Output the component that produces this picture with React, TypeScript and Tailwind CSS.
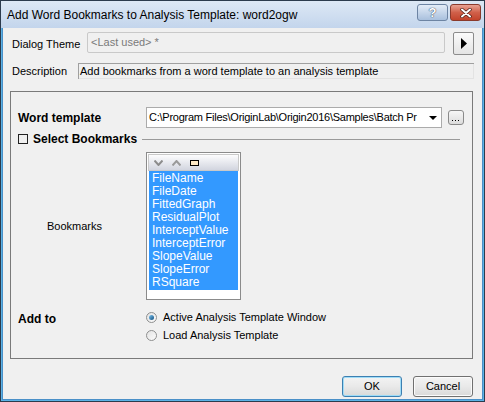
import React from "react";

const bookmarks = [
  "FileName",
  "FileDate",
  "FittedGraph",
  "ResidualPlot",
  "InterceptValue",
  "InterceptError",
  "SlopeValue",
  "SlopeError",
  "RSquare",
];

function Button({ label, primary }: { label: string; primary?: boolean }) {
  return (
    <div
      className={
        "flex h-[21px] w-[60px] items-center justify-center rounded-[3px] border bg-gradient-to-b from-[#f3f3f3] via-[#e9e9e9] to-[#d9d9d9] text-[11px] text-black " +
        (primary
          ? "border-[#3c7fb1] shadow-[inset_0_0_0_1px_#9fdcf7]"
          : "border-[#707070] shadow-[inset_0_0_0_1px_#fbfbfb]")
      }
    >
      {label}
    </div>
  );
}

function Radio({ checked, label }: { checked?: boolean; label: string }) {
  return (
    <div className="flex h-[18px] items-center gap-[6px]">
      <div className="flex h-[11px] w-[11px] items-center justify-center rounded-full border border-[#8e8f8f] bg-gradient-to-br from-[#e2e2e2] to-[#fcfcfc]">
        {checked && (
          <div className="h-[5px] w-[5px] rounded-full bg-gradient-to-br from-[#7bc4f0] to-[#0c4f7f]" />
        )}
      </div>
      <span>{label}</span>
    </div>
  );
}

export default function App() {
  return (
    <div
      className="flex h-[402px] w-[485px] flex-col border border-[#2c3b4d] bg-[#5bb2e6] text-[11px] text-black"
      style={{ fontFamily: '"Liberation Sans", Arial, sans-serif' }}
    >
      {/* title bar */}
      <div className="flex h-[27px] items-center justify-between bg-gradient-to-b from-[#dde8f5] to-[#c3d5ec] pl-[6px] pr-[3px]">
        <span className="text-[12px] text-black">
          Add Word Bookmarks to Analysis Template: word2ogw
        </span>
        <div className="flex gap-[2px] self-start pt-[3px]">
          <div className="flex h-[17px] w-[31px] items-center justify-center rounded-[3px] border border-[#6d84a3] bg-gradient-to-b from-[#e3ecf7] to-[#a9c0dd] text-[13px] font-bold text-white [text-shadow:0_0_1px_#2d3e55,0_0_1px_#2d3e55]">
            ?
          </div>
          <div className="flex h-[17px] w-[31px] items-center justify-center rounded-[3px] border border-[#8a3a2c] bg-gradient-to-b from-[#e8a293] via-[#d0604a] to-[#c2432b]">
            <svg width="12" height="10" viewBox="0 0 12 10">
              <path d="M2 1.5 L10 8.5 M10 1.5 L2 8.5" stroke="#4a1c14" strokeWidth="3.4" strokeLinecap="round" />
              <path d="M2 1.5 L10 8.5 M10 1.5 L2 8.5" stroke="#ffffff" strokeWidth="2" strokeLinecap="round" />
            </svg>
          </div>
        </div>
      </div>

      {/* body */}
      <div className="mx-[1px] mb-[1px] flex flex-1 flex-col border-x-[1px] border-b-[1px] border-[#4a90c8] bg-[#f0f0f0] pt-[4px]">
        <div className="flex h-[23px] pl-[9px]">
          <div className="w-[75px] pt-[4px]">Dialog Theme</div>
          <div className="flex h-[21px] w-[358px] items-center rounded-[2px] border border-[#c9c9c9] bg-[#f0f0f0] pl-[3px] text-[#7a7a7a]">
            &lt;Last used&gt; *
          </div>
          <div className="ml-[8px] flex h-[23px] w-[21px] items-center justify-center rounded-[2px] border border-[#8c8c8c] bg-gradient-to-b from-[#fbfbfb] to-[#e4e4e4]">
            <svg width="6" height="11" viewBox="0 0 6 11">
              <path d="M0 0 L6 5.5 L0 11 Z" fill="#000" />
            </svg>
          </div>
        </div>

        <div className="mt-[8px] flex h-[16px] items-center pl-[9px]">
          <div className="w-[66px]">Description</div>
          <div className="flex h-[16px] w-[396px] items-center border-l border-t border-[#a0a0a0] bg-[#f0f0f0] pl-[1px] shadow-[inset_-1px_-1px_0_#e3e3e3]">
            Add bookmarks from a word template to an analysis template
          </div>
        </div>

        {/* group box */}
        <div className="ml-[7px] mt-[12px] flex h-[268px] w-[463px] flex-col border border-[#7a7a7a] pl-[7px] pt-[15px]">
          <div className="flex h-[21px] items-center">
            <div className="w-[128px] text-[12px] font-bold">Word template</div>
            <div className="flex h-[21px] w-[296px] items-center border border-[#ababab] bg-white pl-[2px]">
              <span className="w-[276px] whitespace-nowrap tracking-[-0.25px]">
                C:\Program Files\OriginLab\Origin2016\Samples\Batch Pr
              </span>
              <svg width="8" height="4" viewBox="0 0 8 4" className="ml-[4px]">
                <path d="M0 0 L8 0 L4 4 Z" fill="#000" />
              </svg>
            </div>
            <div className="ml-[6px] flex h-[15px] w-[16px] items-end justify-center rounded-[3px] border border-[#8a8a8a] bg-gradient-to-b from-[#f7f7f7] to-[#dcdcdc] pb-[2px]">
              <svg width="8" height="2" viewBox="0 0 8 2">
                <rect x="0" y="0" width="1" height="1" fill="#000" />
                <rect x="3" y="0" width="1" height="1" fill="#000" />
                <rect x="6" y="0" width="1" height="1" fill="#000" />
              </svg>
            </div>
          </div>

          <div className="mt-[5px] flex h-[12px] items-center">
            <div className="h-[10px] w-[10px] border border-[#222]" />
            <span className="ml-[5px] text-[12px] font-bold">Select Bookmarks</span>
            <div className="ml-[5px] mr-[12px] h-[1px] flex-1 bg-[#9a9a9a]" />
          </div>

          <div className="mt-[7px] flex">
            <div className="flex w-[128px] items-center pl-[29px]">Bookmarks</div>
            <div className="flex h-[148px] w-[95px] flex-col border border-[#8b8b8b] bg-white p-[1px]">
              <div className="flex h-[17px] items-center gap-[9px] border border-[#c9c9c9] bg-gradient-to-b from-[#fdfdfe] to-[#d2d5df] pl-[5px]">
                <svg width="9" height="6" viewBox="0 0 9 6">
                  <path d="M0.5 0.5 L4.5 5 L8.5 0.5" stroke="#8c8c8c" strokeWidth="2" fill="none" />
                </svg>
                <svg width="9" height="6" viewBox="0 0 9 6">
                  <path d="M0.5 5.5 L4.5 1 L8.5 5.5" stroke="#9a9a9a" strokeWidth="2" fill="none" />
                </svg>
                <div className="h-[6px] w-[9px] border border-black bg-[#fde9c6]" />
              </div>
              <div className="mx-[1px] flex flex-col bg-[#3399ff] py-[1px] pl-[3px] text-white">
                {bookmarks.map((b) => (
                  <div key={b} className="h-[13px] leading-[13px] text-[12px]">
                    {b}
                  </div>
                ))}
              </div>
            </div>
          </div>

          <div className="mt-[8px] flex">
            <div className="w-[128px] pt-[2px] text-[12px] font-bold">Add to</div>
            <div className="flex flex-col">
              <Radio checked label="Active Analysis Template Window" />
              <Radio label="Load Analysis Template" />
            </div>
          </div>
        </div>

        <div className="mt-[17px] flex justify-end gap-[11px] pr-[9px]">
          <Button label="OK" primary />
          <Button label="Cancel" />
        </div>
      </div>
    </div>
  );
}
